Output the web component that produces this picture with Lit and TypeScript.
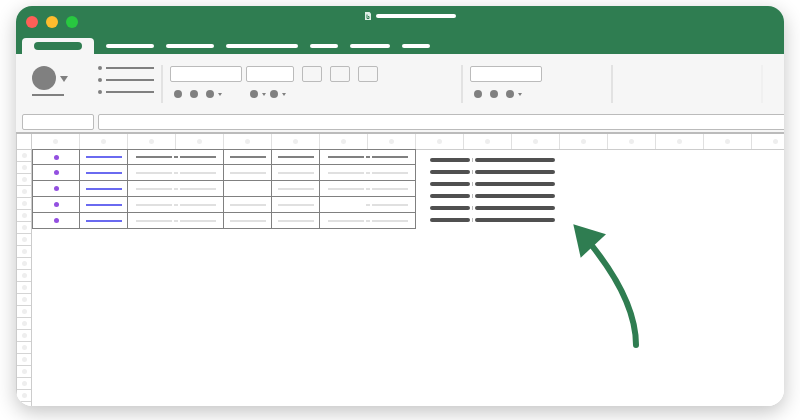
import { LitElement, html, css, nothing } from "lit";
import { customElement } from "lit/decorators.js";

const COLS = Array.from({ length: 16 }, (_, i) => i);
const ROWS = Array.from({ length: 22 }, (_, i) => i);

// For each table row: whether the optional cells are present.
const DATA = [
  { dark: true, c4: true, l7: true },
  { dark: false, c4: true, l7: true },
  { dark: false, c4: false, l7: true },
  { dark: false, c4: true, l7: false },
  { dark: false, c4: true, l7: true },
];

@customElement("app-root")
export class AppRoot extends LitElement {
  static styles = css`
    :host { display: block; width: 800px; height: 420px; overflow: hidden; background: #fff; font-family: "Liberation Sans", sans-serif; }
    .page { padding: 6px 16px 14px; height: 420px; box-sizing: border-box; }
    .win { position: relative; height: 400px; border-radius: 16px; overflow: hidden; background: #fff; }
    .frame { border-radius: 16px; box-shadow: 0 6px 20px rgba(0,0,0,.24); }
    .pill { display: block; background: #fff; border-radius: 2px; }

    .head { height: 48px; background: #2f7d51; display: flex; flex-direction: column; }
    .top { height: 32px; display: flex; box-sizing: border-box; padding-top: 10px; }
    .lights { display: flex; gap: 8px; padding-left: 10px; }
    .light { width: 12px; height: 12px; border-radius: 50%; }
    .title { display: flex; align-items: flex-start; gap: 5px; margin-left: 287px; margin-top: -4px; }
    .title svg { display: block; }
    .title .pill { width: 80px; height: 4px; margin-top: 2px; }
    .tabs { display: flex; align-items: flex-start; padding-left: 6px; height: 16px; }
    .tab { width: 72px; height: 16px; background: #f6f6f6; border-radius: 4px 4px 0 0; display: flex; justify-content: center; padding-top: 4px; box-sizing: border-box; margin-right: 12px; }
    .tab i { display: block; width: 48px; height: 8px; border-radius: 4px; background: #2f7d51; }
    .tabs .pill { height: 4px; margin-top: 6px; margin-right: 12px; }

    .ribbon { height: 78px; background: #f6f6f6; }
    .tools { height: 60px; display: flex; align-items: flex-start; padding-top: 11px; box-sizing: border-box; }
    .g { display: flex; flex-direction: column; flex: none; box-sizing: border-box; }
    .avatar { width: 82px; padding-left: 16px; padding-top: 1px; }
    .avatar-top { display: flex; align-items: center; gap: 4px; }
    .circle { width: 24px; height: 24px; border-radius: 50%; background: #808080; flex: none; }
    .tri-b { width: 0; height: 0; margin-top: 1px; border-left: 4px solid transparent; border-right: 4px solid transparent; border-top: 6px solid #808080; }
    .under { width: 32px; height: 2px; background: #808080; margin-top: 4px; }
    .bullets { width: 63px; padding-top: 1px; gap: 8px; }
    .bl { display: flex; align-items: center; gap: 4px; height: 4px; }
    .bl b { width: 4px; height: 4px; border-radius: 50%; background: #808080; }
    .bl i { width: 48px; height: 2px; background: #808080; }
    .div { width: 2px; height: 38px; background: #e2e2e2; flex: none; }
    .div.faint { background: #f0f0f0; }
    .fields { margin-left: 7px; padding-top: 1px; gap: 8px; }
    .row { display: flex; gap: 4px; }
    .in { height: 16px; flex: none; box-sizing: border-box; border: 1px solid #bbb; border-radius: 2px; background: #fff; }
    .w72 { width: 72px; }
    .w48 { width: 48px; }
    .sq { width: 20px; height: 16px; flex: none; box-sizing: border-box; border: 1px solid #bbb; border-radius: 2px; margin-left: 4px; }
    .dots { display: flex; align-items: center; padding-left: 4px; height: 8px; }
    .d { width: 8px; height: 8px; border-radius: 50%; background: #808080; margin-right: 8px; flex: none; }
    .d.tight { margin-right: 4px; }
    .tri-s { width: 0; height: 0; border-left: 2px solid transparent; border-right: 2px solid transparent; border-top: 3px solid #808080; flex: none; }
    .tri-s.wide { margin-right: 28px; }
    .tri-s.near { margin-right: 4px; }
    .w291 { width: 291px; }
    .w141 { width: 141px; }
    .spacer { width: 148px; flex: none; }
    .formula { display: flex; gap: 4px; padding-left: 6px; height: 16px; }
    .formula .long { width: 720px; }

    .sheet { border-top: 2px solid #bbb; }
    .colhead { display: flex; height: 16px; box-sizing: border-box; border-bottom: 1px solid #ccc; background: #fff; }
    .corner { width: 16px; flex: none; box-sizing: border-box; border-left: 1px solid #ccc; border-right: 1px solid #ccc; }
    .ch { width: 48px; flex: none; box-sizing: border-box; border-right: 1px solid #e0e0e0; display: flex; align-items: center; justify-content: center; }
    .ch i, .rh i { display: block; width: 5px; height: 5px; border-radius: 50%; background: #eee; }
    .body { display: flex; height: 256px; }
    .rowhead { width: 16px; flex: none; box-sizing: border-box; border-left: 1px solid #ccc; border-right: 1px solid #ccc; }
    .rh { height: 12px; box-sizing: border-box; border-bottom: 1px solid #d4d4d4; display: flex; align-items: center; justify-content: center; }
    .canvas { display: flex; align-items: flex-start; flex: 1; }

    .table { width: 384px; flex: none; margin-top: -1px; box-sizing: border-box; border-left: 1px solid #808080; border-top: 1px solid #808080; background: #fff; position: relative; }
    .tr { display: grid; grid-template-columns: 47px 48px 96px 48px 48px 96px; height: 16px; box-sizing: border-box; border-bottom: 1px solid #808080; }
    .tr:first-child { height: 15px; }
    .td { box-sizing: border-box; border-right: 1px solid #808080; display: flex; align-items: center; justify-content: center; gap: 2px; }
    .td .p { width: 5px; height: 5px; border-radius: 50%; background: #9350e0; }
    .td .b { width: 36px; height: 2px; background: #6a6af0; }
    .td .l { width: 36px; height: 2px; background: #e0e0e0; }
    .td .s { width: 4px; height: 2px; background: #e0e0e0; }
    .td .hide { visibility: hidden; }
    .dark .td .l, .dark .td .s { background: #808080; }

    .list { margin-left: 14px; margin-top: 8px; display: flex; flex-direction: column; gap: 8px; }
    .li { display: flex; align-items: center; height: 4px; }
    .li i { display: block; height: 4px; border-radius: 2px; background: #505050; }
    .li .a { width: 40px; }
    .li .c { width: 80px; }
    .li u { display: block; width: 1px; height: 4px; background: #bbb; margin: 0 2px; }

    .arrow { position: absolute; left: 0; top: 0; pointer-events: none; }
  `;

  private line(show = true) {
    return html`<span class="l ${show ? "" : "hide"}"></span>`;
  }

  private dbl(first = true) {
    return html`${this.line(first)}<span class="s"></span>${this.line()}`;
  }

  render() {
    return html`
      <div class="page">
        <div class="frame">
        <div class="win">
          <div class="head">
            <div class="top">
              <div class="lights">
                <span class="light" style="background:#ff5f57"></span>
                <span class="light" style="background:#febc2e"></span>
                <span class="light" style="background:#28c840"></span>
              </div>
              <div class="title">
                <svg width="6" height="8" viewBox="0 0 6 8"><path d="M0 0H4.5L6 1.5V8H0Z" fill="#dfeee6"/><path d="M2 2.5V6.5H4V4.5H3" fill="none" stroke="#2f7d51" stroke-width="1"/></svg>
                <span class="pill"></span>
              </div>
            </div>
            <div class="tabs">
              <div class="tab"><i></i></div>
              ${[48, 48, 72, 28, 40, 28].map((w) => html`<span class="pill" style="width:${w}px"></span>`)}
            </div>
          </div>
          <div class="ribbon">
            <div class="tools">
              <div class="g avatar">
                <div class="avatar-top"><div class="circle"></div><div class="tri-b"></div></div>
                <div class="under"></div>
              </div>
              <div class="g bullets">
                ${[0, 1, 2].map(() => html`<div class="bl"><b></b><i></i></div>`)}
              </div>
              <div class="div"></div>
              <div class="g fields w291">
                <div class="row">
                  <div class="in w72"></div><div class="in w48"></div>
                  <div class="sq"></div><div class="sq"></div><div class="sq"></div>
                </div>
                <div class="dots">
                  <span class="d"></span><span class="d"></span><span class="d tight"></span><span class="tri-s wide"></span>
                  <span class="d tight"></span><span class="tri-s near"></span>
                  <span class="d tight"></span><span class="tri-s"></span>
                </div>
              </div>
              <div class="div"></div>
              <div class="g fields w141">
                <div class="in w72"></div>
                <div class="dots">
                  <span class="d"></span><span class="d"></span><span class="d tight"></span><span class="tri-s"></span>
                </div>
              </div>
              <div class="div"></div>
              <div class="spacer"></div>
              <div class="div faint"></div>
            </div>
            <div class="formula">
              <div class="in w72"></div>
              <div class="in long"></div>
            </div>
          </div>
          <div class="sheet">
            <div class="colhead">
              <div class="corner"></div>
              ${COLS.map(() => html`<div class="ch"><i></i></div>`)}
            </div>
            <div class="body">
              <div class="rowhead">
                ${ROWS.map(() => html`<div class="rh"><i></i></div>`)}
              </div>
              <div class="canvas">
                <div class="table">
                  ${DATA.map(
                    (r) => html`
                      <div class="tr ${r.dark ? "dark" : ""}">
                        <div class="td"><span class="p"></span></div>
                        <div class="td"><span class="b"></span></div>
                        <div class="td">${this.dbl()}</div>
                        <div class="td">${r.c4 ? this.line() : nothing}</div>
                        <div class="td">${this.line()}</div>
                        <div class="td">${this.dbl(r.l7)}</div>
                      </div>
                    `
                  )}
                </div>
                <div class="list">
                  ${[0, 1, 2, 3, 4, 5].map(() => html`<div class="li"><i class="a"></i><u></u><i class="c"></i></div>`)}
                </div>
              </div>
            </div>
          </div>
          <svg class="arrow" width="768" height="400" viewBox="16 6 768 400">
            <path d="M636 345C636 310 615 275 593 247" fill="none" stroke="#2f7d51" stroke-width="6" stroke-linecap="round"/>
            <path d="M573.3 224.3L606 234.3L580.7 257.7Z" fill="#2f7d51"/>
          </svg>
        </div>
        </div>
      </div>
    `;
  }
}
